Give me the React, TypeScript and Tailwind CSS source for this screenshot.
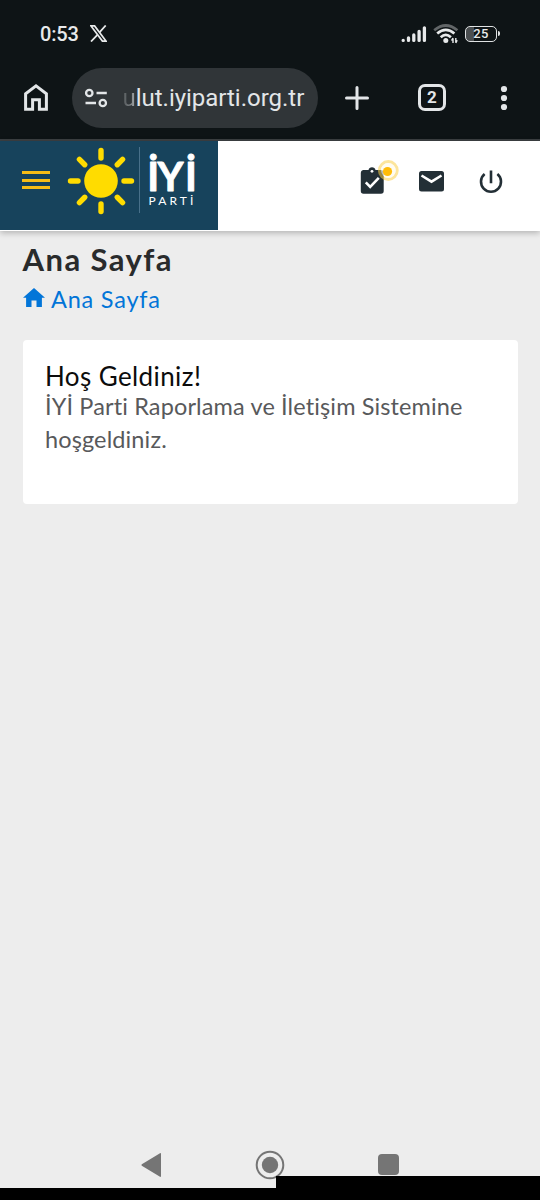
import type { ReactNode } from "react";

const rays = [0, 45, 90, 135, 180, 225, 270, 315];

function Sun() {
  return (
    <svg className="mt-[5.5px] ml-[17px] h-[68px] w-[68px] shrink-0" viewBox="-34 -34 68 68">
      <circle r="16.8" fill="#ffdc00" />
      {rays.map((r) => (
        <line key={r} y1="-23" y2="-30.5" transform={`rotate(${r})`} stroke="#ffdc00" strokeWidth="5.4" strokeLinecap="round" />
      ))}
    </svg>
  );
}

function StatusBar() {
  return (
    <div className="flex h-[67.5px] items-center text-[#e8eaeb]">
      <span className="ml-[40px] w-[50px] font-[Roboto,sans-serif] text-[20px] leading-none font-medium tracking-[-0.2px]">0:53</span>
      <svg className="h-[17px] w-[17px]" viewBox="0 0 17 17" fill="none" stroke="currentColor">
        <path d="M1 .9h3.6l11.4 15.2h-3.6z" strokeWidth="1.7" />
        <path d="M15.7.5 9.5 7.3M7.4 9.8 1 16.5" strokeWidth="1.8" />
      </svg>
      <svg className="ml-[294px] h-[18px] w-[26px]" viewBox="0 0 26 18" stroke="currentColor" strokeWidth="3.3" strokeLinecap="round">
        <path d="M2.2 15.3v.1M7.5 13v2.4M12.8 10v5.4M18.1 6.5v8.9M23.4 2.8v12.6" />
      </svg>
      <svg className="ml-[6px] h-[20px] w-[26px]" viewBox="0 0 26 20" fill="none" strokeWidth="2.7">
        <path d="M1.2 6.3Q12.8-3.3 24.4 6.3" stroke="#626668" />
        <path d="M4.2 9.6Q12.8 2.2 21.4 9.6M7.7 13.3Q12.8 8.6 17.9 13.3" stroke="currentColor" />
        <circle cx="12.8" cy="16.4" r="2.5" fill="currentColor" />
        <path d="M20 19v-4.6M22.8 14v4.6M18.5 16.5 20 14M24.2 16.3 22.8 19" stroke="currentColor" strokeWidth="1.4" />
      </svg>
      <div className="ml-[6px] flex h-[16px] w-[32px] items-center justify-center rounded-[5px] border-[1.5px] border-[#dfe2e3] bg-linear-to-r from-[#4a4e50] from-25% to-transparent to-25% font-[Roboto,sans-serif] text-[13px] leading-none font-medium tracking-[0.3px]">25</div>
      <div className="ml-px h-[5px] w-[2px] rounded-r bg-[#dfe2e3]" />
    </div>
  );
}

function BrowserBar() {
  return (
    <div className="flex h-[60px] items-center text-[#e3e6e8]">
      <svg className="ml-[24px] h-[27px] w-[24px]" viewBox="0 0 24 27" fill="none" stroke="currentColor" strokeWidth="3">
        <path d="M1.6 25.2V9.8L12 1.9 22.4 9.8v15.4h-7v-9.5H8.6v9.5z" />
      </svg>
      <div className="ml-[24px] flex h-[60px] w-[246px] items-center rounded-full bg-[#303538]">
        <svg className="ml-[13px] h-[20px] w-[23px]" viewBox="0 0 23 20" fill="none" stroke="currentColor" strokeWidth="2.3">
          <circle cx="4.3" cy="5" r="3.2" />
          <path d="M11.5 5h10.3M.5 15h10.5" />
          <circle cx="17.8" cy="15" r="3.2" />
        </svg>
        <span className="ml-[14.5px] font-[Roboto,sans-serif] text-[24px] leading-[32px] tracking-[-0.02px] whitespace-nowrap">
          <span className="bg-linear-to-r from-[#505558] to-[#a5a9ab] bg-clip-text text-transparent">u</span>lut.iyiparti.org.tr
        </span>
      </div>
      <svg className="ml-[27px] h-[24px] w-[24px]" viewBox="0 0 24 24" stroke="currentColor" strokeWidth="3" strokeLinecap="round">
        <path d="M12 1.5v21M1.5 12h21" />
      </svg>
      <div className="ml-[49px] flex h-[27px] w-[28px] items-center justify-center rounded-[7px] border-[3px] border-[#e3e6e8] font-[Roboto,sans-serif] text-[17px] leading-none font-bold">2</div>
      <svg className="ml-[54px] h-[26px] w-[8px]" viewBox="0 0 8 26" fill="currentColor">
        <circle cx="4" cy="4" r="3.1" /><circle cx="4" cy="13" r="3.1" /><circle cx="4" cy="22" r="3.1" />
      </svg>
    </div>
  );
}

function SiteHeader() {
  return (
    <header className="relative z-10 flex h-[90px] bg-white shadow-[0_2px_6px_rgba(0,0,0,0.25)]">
      <div className="flex h-[88.5px] w-[217.5px] bg-[#17435c]">
        <div className="mt-[30px] ml-[22px] flex w-[28px] flex-col gap-[4.5px]">
          <div className="h-[3px] bg-[#f8bd16]" />
          <div className="h-[3px] bg-[#f8bd16]" />
          <div className="h-[3px] bg-[#f8bd16]" />
        </div>
        <Sun />
        <div className="mt-[6px] ml-[4px] h-[66px] w-px bg-[#48708a]" />
        <svg className="mt-[6px] ml-[6px] h-[64px] w-[52px] overflow-visible" viewBox="0 0 52 64" fill="#fff">
          <text x="1.2 11.6 38.9" y="44.2" fontFamily="Lato, sans-serif" fontSize="40" fontWeight="700" stroke="#fff" strokeWidth="0.9" strokeLinejoin="round">İYİ</text>
          <text x="2.5" y="57.5" fontFamily="Lato, sans-serif" fontSize="12" letterSpacing="3.1">PARTİ</text>
        </svg>
      </div>
      <div className="mt-[18.5px] ml-[142px] flex h-[44px] w-[144px] items-start text-[#232f36]">
        <svg className="h-[40px] w-[40px]" viewBox="0 0 40 40">
          <path d="M3 10h5.5a3.6 3.6 0 0 1 7 0H21a2.7 2.7 0 0 1 2.7 2.7V31a2.7 2.7 0 0 1-2.7 2.7H3.5A2.7 2.7 0 0 1 .8 31V12.7A2.7 2.7 0 0 1 3 10z" fill="currentColor" />
          <circle cx="12" cy="11.3" r="1.4" fill="#fff" />
          <path d="m5.8 22.3 4.4 4.5 8.6-8.9" fill="none" stroke="#fff" strokeWidth="2.6" />
          <circle cx="28.3" cy="10.5" r="8.9" fill="none" stroke="#f9cf4b" strokeWidth="3" opacity=".55" />
          <circle cx="28.3" cy="10.5" r="7.4" fill="#fffbea" opacity=".7" />
          <circle cx="27.5" cy="11.5" r="4.6" fill="#ffbc09" />
        </svg>
        <svg className="mt-[11px] ml-[19px] h-[21px] w-[25px]" viewBox="0 0 25 21">
          <rect width="25" height="20.5" rx="2.5" fill="currentColor" />
          <path d="m2.5 4.5 10 6.2 10-6.2" fill="none" stroke="#fff" strokeWidth="2.6" />
        </svg>
        <svg className="mt-[10px] ml-[35.5px] h-[24px] w-[24px]" viewBox="0 0 24 24" fill="none" stroke="currentColor" strokeWidth="2.6">
          <path d="M12 .5v12.8M5.6 4A10 10 0 1 0 18.4 4" />
        </svg>
      </div>
    </header>
  );
}

function Line({ className, children }: { className: string; children: ReactNode }) {
  return (
    <div className={className}>
      <span>{children}</span>
    </div>
  );
}

export default function App() {
  return (
    <div className="flex h-[1200px] w-[540px] flex-col overflow-hidden bg-[#ededed] font-[Lato,sans-serif] whitespace-nowrap">
      <div className="h-[141px] border-b-2 border-[#3b3f42] bg-[#0e1416]">
        <StatusBar />
        <BrowserBar />
      </div>
      <SiteHeader />
      <main className="flex h-[917px] flex-col px-[22.5px]">
        <Line className="mt-[10px] h-[36px] text-[31px] leading-[36px] font-bold tracking-[1.45px] text-[#292b2c]">Ana Sayfa</Line>
        <div className="mt-[7px] flex h-[30px] items-start text-[#0275d8]">
          <svg className="mt-[4px] h-[20px] w-[22px]" viewBox="0 0 22 20" fill="currentColor">
            <path d="m11 0 11 9.8h-3.1V19h-5.4v-6.6h-5V19H3.1V9.8H0z" />
          </svg>
          <span className="ml-[6.5px] text-[23.5px] leading-[31px] tracking-[0.8px]">Ana Sayfa</span>
        </div>
        <section className="mt-[26px] h-[164px] w-[495px] rounded-[4px] bg-white pt-[20.5px] pl-[22.5px]">
          <h2 className="h-[29px] text-[26px] leading-[30px] tracking-[0.4px] text-[#0c0c0c]">Hoş Geldiniz!</h2>
          <p className="text-[23.5px] leading-[33.5px] tracking-[0.13px] text-[#58595b]">
            İYİ Parti Raporlama ve İletişim Sistemine<br />hoşgeldiniz.
          </p>
        </section>
      </main>
      <nav className="relative flex h-[40px] items-start bg-[#ededed] text-[#757575]">
        <svg className="mt-[4px] ml-[141px] h-[26px] w-[21px]" viewBox="0 0 21 26" fill="currentColor">
          <path d="M.8 12.2Q0 13 .8 13.8L19 24.7q1 .6 1-.6V1.9q0-1.2-1-.6z" />
        </svg>
        <svg className="mt-[1.5px] ml-[93px] h-[30px] w-[30px]" viewBox="0 0 30 30">
          <circle cx="15" cy="15" r="13.3" fill="none" stroke="currentColor" strokeWidth="2" />
          <circle cx="15" cy="15" r="8.2" fill="currentColor" />
        </svg>
        <div className="mt-[6px] ml-[93px] h-[21px] w-[21px] rounded-[4px] bg-[#757575]" />
      </nav>
      <div className="relative flex h-[12px] bg-black">
        <div className="absolute right-0 bottom-0 h-[24px] w-[264px] bg-black" />
      </div>
    </div>
  );
}
